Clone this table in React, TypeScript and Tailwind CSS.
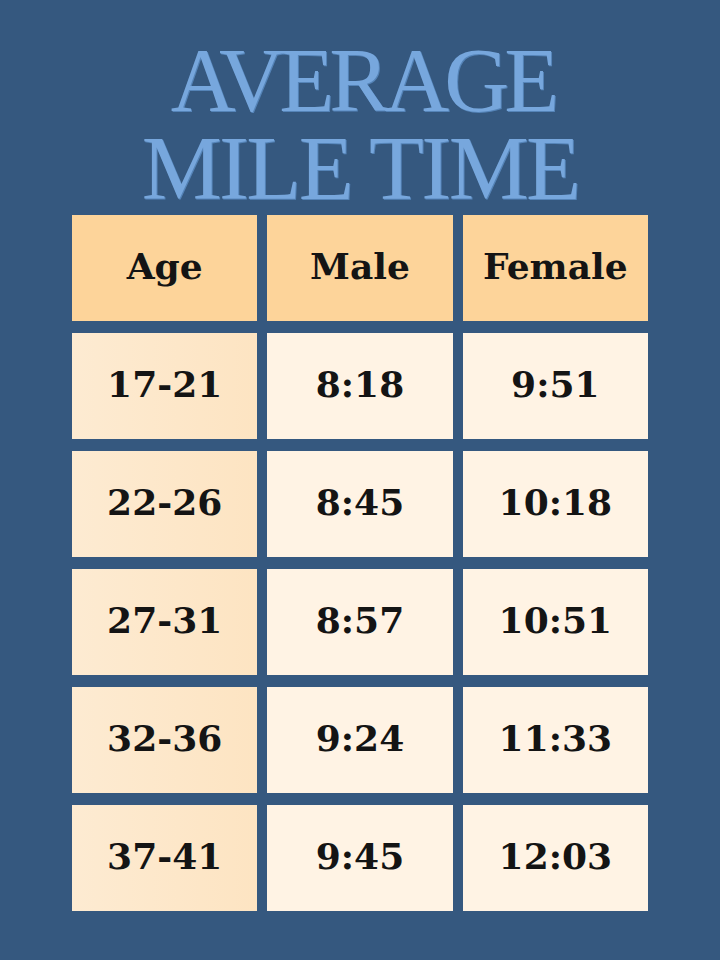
const rows = [
  ['17-21', '8:18', '9:51'],
  ['22-26', '8:45', '10:18'],
  ['27-31', '8:57', '10:51'],
  ['32-36', '9:24', '11:33'],
  ['37-41', '9:45', '12:03'],
]

const cellText = "font-['DejaVu_Serif',serif] font-bold text-[36px] text-[#141414] pb-[4px]"

export default function App() {
  return (
    <div className="w-[720px] h-[960px] bg-[#35587f] pt-[37px]">
      <h1 className="flex flex-col items-center font-['Liberation_Serif',serif] text-[90px] leading-[88px] text-[#77a7dd] [text-shadow:1px_1px_0_#5584b8]">
        <span className="tracking-[-0.055em] pl-[5px]">AVERAGE</span>
        <span className="tracking-[-0.03em]">MILE TIME</span>
      </h1>

      <div className="mx-[72px] mt-[2px] grid grid-cols-3 gap-x-[10px] gap-y-[12px]">
        {['Age', 'Male', 'Female'].map((h) => (
          <div key={h} className={`h-[106px] flex items-center justify-center bg-[#fdd49a] ${cellText}`}>
            {h}
          </div>
        ))}
        {rows.map((r) =>
          r.map((v, i) => (
            <div
              key={r[0] + i}
              className={`h-[106px] flex items-center justify-center ${cellText} ${
                i === 0 ? 'bg-gradient-to-r from-[#fdebd2] to-[#fde4c2]' : 'bg-[#fff3e4]'
              }`}
            >
              {v}
            </div>
          ))
        )}
      </div>
    </div>
  )
}
